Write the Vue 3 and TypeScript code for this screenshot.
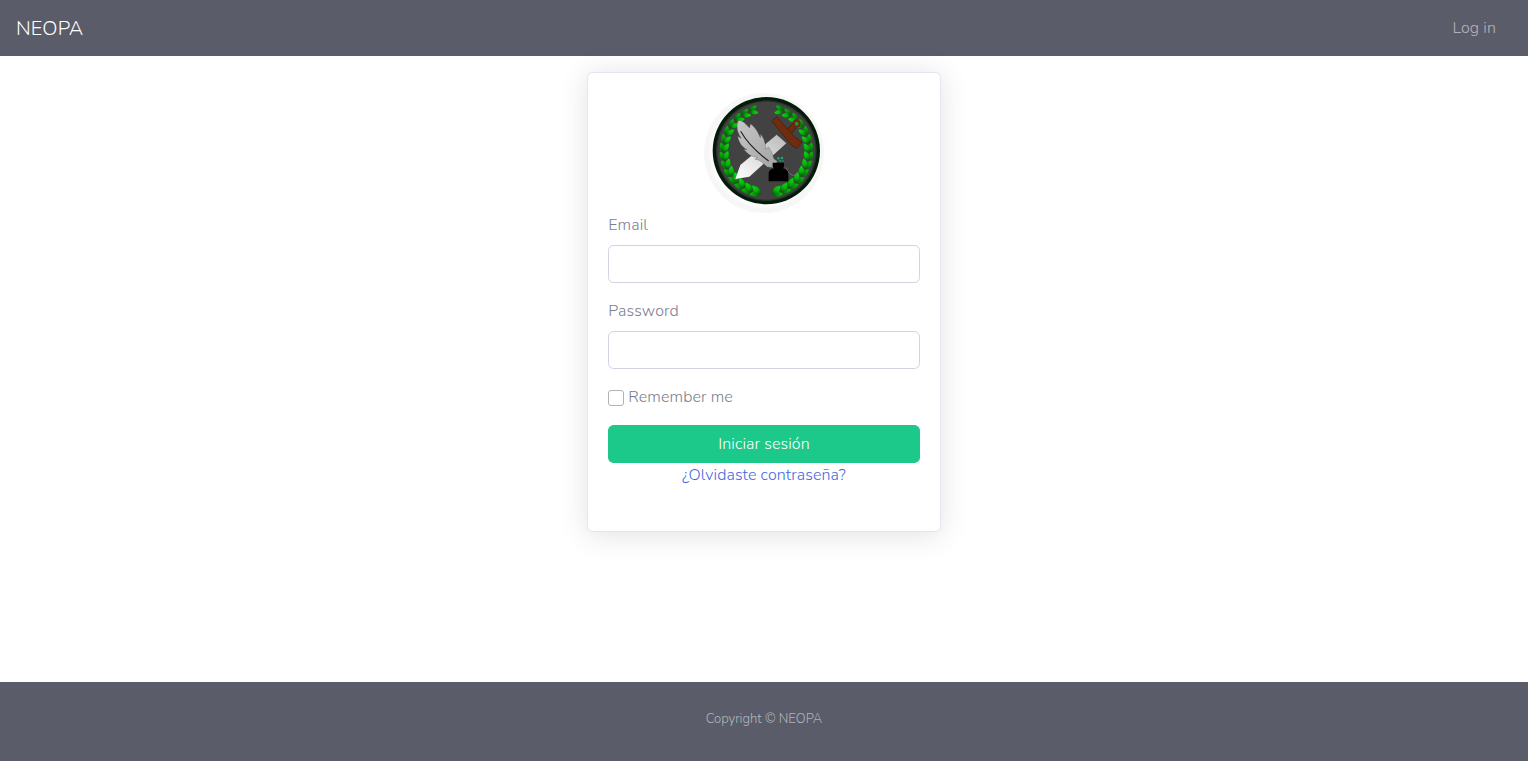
<script setup lang="ts">
import { ref } from 'vue'

interface Leaf {
  transform: string
  fill: string
}

const email = ref('')
const password = ref('')
const remember = ref(false)

const CX = 199
const CY = 188

// Two leaves per stem node, growing from the bottom of the wreath to the top.
function branch(side: 1 | -1): Leaf[] {
  const leaves: Leaf[] = []
  const count = 14
  for (let i = 0; i < count; i++) {
    const t = i / (count - 1)
    const deg = 14 + t * 148
    const a = (deg * Math.PI) / 180
    const size = 1.4 - 0.34 * t
    for (const inner of [false, true]) {
      const r = inner ? 122 : 133
      const x = CX + side * r * Math.sin(a)
      const y = CY + r * Math.cos(a)
      const tilt = inner ? -30 : 16
      const rot = side * (90 - deg + tilt)
      leaves.push({
        transform: `translate(${x.toFixed(1)} ${y.toFixed(1)}) rotate(${rot.toFixed(1)}) scale(${size.toFixed(2)})`,
        fill: inner ? 'url(#leaf)' : 'url(#leaf-outer)',
      })
    }
  }
  return leaves
}

const leaves: Leaf[] = [...branch(-1), ...branch(1)]
</script>

<template>
  <div class="page">
    <header class="navbar">
      <a class="brand">NEOPA</a>
      <a class="login">Log in</a>
    </header>

    <main class="content">
      <form class="card" @submit.prevent>
        <svg class="logo" viewBox="12 15 360 360" aria-hidden="true">
          <defs>
            <linearGradient id="leaf" x1="0" y1="0" x2="0" y2="1">
              <stop offset="0" stop-color="#0be00f" />
              <stop offset=".6" stop-color="#09b00e" />
              <stop offset="1" stop-color="#06600a" />
            </linearGradient>
            <linearGradient id="leaf-outer" x1="0" y1="0" x2="0" y2="1">
              <stop offset="0" stop-color="#0ac60f" />
              <stop offset="1" stop-color="#055a08" />
            </linearGradient>
            <linearGradient id="blade" x1="0" y1="1" x2="1" y2="0">
              <stop offset="0" stop-color="#ffffff" />
              <stop offset="1" stop-color="#b9b9b9" />
            </linearGradient>
            <linearGradient id="plume" x1="0" y1="0" x2="1" y2="1">
              <stop offset="0" stop-color="#c6c6c6" />
              <stop offset="1" stop-color="#a4a4a4" />
            </linearGradient>
            <radialGradient id="halo">
              <stop offset=".86" stop-color="#ffffff" />
              <stop offset=".93" stop-color="#f6f6f6" />
              <stop offset="1" stop-color="#f7f7f7" />
            </radialGradient>
          </defs>

          <circle cx="192" cy="195" r="180" fill="url(#halo)" />
          <circle cx="199" cy="188" r="161" fill="#031c07" />
          <circle cx="199" cy="188" r="151" fill="#2c302d" />
          <circle cx="199" cy="188" r="147" fill="#424242" />

          <path
            v-for="(leaf, i) in leaves"
            :key="i"
            :transform="leaf.transform"
            :fill="leaf.fill"
            stroke="#0d5a10"
            stroke-width=".6"
            d="M0 11C-8 6-9-4 0-14C9-4 8 6 0 11Z"
          />

          <path d="M230 140L259 166L148 266L106 273L121 231Z" fill="url(#blade)" />
          <path d="M256 128L279 106L290 117L271 140Z" fill="#6c2b0b" stroke="#34140a" stroke-width="1.5" />
          <path
            d="M231 86L244 102L286 149L306 162L291 181L276 173L234 122L215 99Z"
            fill="#702c0c" stroke="#32140a" stroke-width="1.5"
          />
          <circle cx="290" cy="107" r="9" fill="#159c38" stroke="#6b2609" stroke-width="6" />

          <path
            d="M115 98C126 95 139 110 149 120L151 108C165 116 174 132 181 149L182 137C194 155 197 169 197 184L205 177C216 190 218 202 222 212L232 220L221 239L202 237C189 227 183 215 165 214L172 207C153 208 143 197 131 184L141 185C124 177 116 161 113 145L124 151C110 133 108 112 115 98Z"
            fill="url(#plume)" stroke="#4c4c4c" stroke-width="1"
          />
          <path d="M122 130C139 160 172 194 206 219" fill="none" stroke="#202020" stroke-width="3.5" />

          <path d="M257 238C267 260 278 266 290 259" fill="none" stroke="#777777" stroke-width="2.5" />
          <path d="M218 224H252V236L249 241C259 243 265 249 265 257V280H206V257C206 249 211 243 222 241L218 236Z" fill="#000000" />
          <g fill="#13a875">
            <circle cx="235" cy="211" r="4" />
            <circle cx="246" cy="210" r="4" />
            <circle cx="241" cy="218" r="3" />
            <circle cx="249" cy="219" r="2.5" />
          </g>
        </svg>

        <div class="field">
          <label for="email">Email</label>
          <input id="email" v-model="email" type="email" />
        </div>
        <div class="field">
          <label for="password">Password</label>
          <input id="password" v-model="password" type="password" />
        </div>
        <label class="remember">
          <input v-model="remember" type="checkbox" />
          <span>Remember me</span>
        </label>
        <button type="submit">Iniciar sesión</button>
        <a class="forgot">¿Olvidaste contraseña?</a>
      </form>
    </main>

    <footer class="footer"><span>Copyright © NEOPA</span></footer>
  </div>
</template>

<style>
body {
  margin: 0;
  background: #fff;
}
</style>

<style scoped>
.page {
  display: flex;
  flex-direction: column;
  height: 761px;
  font-family: Nunito, Lato, sans-serif;
  font-size: 16px;
  font-weight: 300;
  letter-spacing: 0.1px;
  line-height: 24px;
  color: #7c7e8e;
}
.navbar {
  display: flex;
  justify-content: space-between;
  align-items: center;
  flex: none;
  height: 56px;
  padding: 0 32px 0 16px;
  box-sizing: border-box;
  background: #5a5c69;
}
.brand {
  padding-top: 2px;
  font-size: 20px;
  color: #fff;
}
.login {
  color: rgba(255, 255, 255, 0.55);
}
.content {
  display: flex;
  flex: 1;
  justify-content: center;
  align-items: flex-start;
  padding-top: 16px;
}
.card {
  display: flex;
  flex-direction: column;
  box-sizing: border-box;
  width: 354px;
  height: 460px;
  padding: 20px;
  border: 1px solid #e3e6f0;
  border-radius: 5.6px;
  background: #fff;
  box-shadow: 0 2.4px 28px rgba(58, 59, 69, 0.15);
}
.logo {
  display: block;
  align-self: center;
  flex: none;
  width: 120px;
  height: 120px;
}
.field {
  display: flex;
  flex-direction: column;
  gap: 8px;
  margin-bottom: 16px;
}
.field label {
  padding-left: 0.3px;
}
.field input {
  box-sizing: border-box;
  width: 100%;
  height: 38px;
  padding: 6px 12px;
  border: 1px solid #d1d3e2;
  border-radius: 5.6px;
  background: #fff;
  font: inherit;
  color: #6e707e;
  outline: none;
}
.remember {
  display: flex;
  align-items: center;
  gap: 4.3px;
  margin-bottom: 16px;
}
.remember input {
  appearance: none;
  box-sizing: border-box;
  width: 16px;
  height: 16px;
  margin: 2px 0 0;
  border: 1px solid #b0b0b2;
  border-radius: 3px;
  background: #fff;
}
button {
  height: 38px;
  padding: 0;
  border: 0;
  border-radius: 5.6px;
  background: #1cc88a;
  font: inherit;
  letter-spacing: inherit;
  color: #fff;
}
.forgot {
  text-align: center;
  color: #4468dc;
}
.footer {
  display: flex;
  justify-content: center;
  flex: none;
  box-sizing: border-box;
  height: 79px;
  padding-top: 25px;
  background: #5a5c69;
  font-size: 13px;
  letter-spacing: 0;
  color: rgba(255, 255, 255, 0.55);
}
</style>
